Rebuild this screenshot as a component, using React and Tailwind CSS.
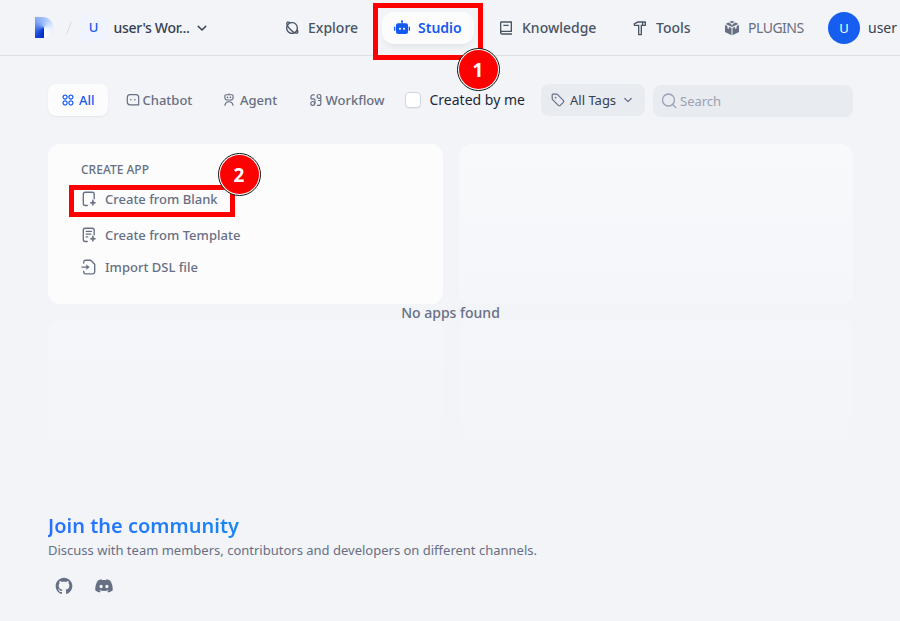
import { RiPlanetLine, RiRobot2Fill, RiBook2Line, RiHammerLine, RiApps2Line, RiRobot3Line, RiGithubFill, RiDiscordFill } from 'react-icons/ri';

const stroke = { fill: 'none', stroke: 'currentColor', strokeLinecap: 'round', strokeLinejoin: 'round' };

function DifyMark() {
  return (
    <div className="h-[21px] w-[18px] rounded-r-[10px] bg-[conic-gradient(from_180deg_at_50%_50%,#0328c4_0deg,#1f4fda_50deg,#4f7eea_90deg,#86abf5_135deg,#a9c6f9_190deg,#cfe0fc_240deg,#e9f1fe_280deg,#ffffff_359deg)] shadow-[0_0_1px_rgba(0,40,120,0.15)]" />
  );
}

function Chevron({ className }) {
  return (
    <svg viewBox="0 0 12 12" className={className} {...stroke} strokeWidth="1.5">
      <path d="M2.2 4.2 6 8l3.8-3.8" />
    </svg>
  );
}

function Cube() {
  return (
    <svg viewBox="0 0 16 16" className="h-4 w-4" fill="currentColor">
      <path d="M8 .8 10.6 2 8 3.2 5.4 2z" />
      <path d="M4.300 2.500 7.300 3.900v1.200L8 5.400l.7-.3V3.900l3-1.400 2.700 1.400L8 7 1.600 3.900z" />
      <path d="M1 4.900 3.400 6.100v2.200l1.500.8V6.800L7.500 8v7.200L1 12z" />
      <path d="M15 4.900 12.600 6.100v2.200l-1.500.8V6.800L8.500 8v7.200L15 12z" />
    </svg>
  );
}

function ChatIcon() {
  return (
    <svg viewBox="0 0 14 14" className="h-[14px] w-[14px] shrink-0" {...stroke} strokeWidth="1.2">
      <path d="M4 1.700h6A2.800 2.800 0 0 1 12.700 4.500v7.300H4A2.800 2.800 0 0 1 1.300 9V4.500A2.800 2.800 0 0 1 4 1.700z" />
      <path d="M4.900 6.300v.7M8.900 6.300v.7" />
    </svg>
  );
}

function FlowIcon() {
  return (
    <svg viewBox="0 0 14 14" className="h-[14px] w-[14px] shrink-0" {...stroke} strokeWidth="1.2">
      <path d="M5.200 1.800H4a2 2 0 0 0-2 2V5.800h2.600a1.500 1.500 0 0 1 1.400 1.500v3" />
      <circle cx="10" cy="3.400" r="1.900" />
      <circle cx="3.700" cy="10.400" r="1.900" />
      <path d="M8.300 12.400h1.500a2 2 0 0 0 2-2V5.500M11.800 7.500H9.500" />
    </svg>
  );
}

function FileIcon({ kind }) {
  return (
    <svg viewBox="0 0 16 16" className="mr-2 h-4 w-4 shrink-0" {...stroke} strokeWidth="1.350">
      {kind === 'import' ? (
        <>
          <path d="M2.700 4V3a1.800 1.800 0 0 1 1.800-1.800h5.200l4 4V13a1.800 1.800 0 0 1-1.800 1.800H4.500A1.800 1.800 0 0 1 2.700 13v-.8" />
          <path d="M.9 8.100h6.500" />
          <path d="M5.600 5.900 8.200 8.100 5.600 10.300z" fill="currentColor" strokeWidth=".5" />
        </>
      ) : (
        <>
          <path d="M6.300 14.500H4.300A2 2 0 0 1 2.300 12.500V3.200a2 2 0 0 1 2-2h6.900a2 2 0 0 1 2 2v4.600" />
          <path d="M11.900 9.100l.7 2 2 .7-2 .7-.7 2-.7-2-2-.7 2-.7z" fill="currentColor" strokeWidth=".8" />
          {kind === 'template' && <path d="M5.200 4.300h5.200M5.200 7.100h4.600M5.200 9.900h1.500" />}
        </>
      )}
    </svg>
  );
}

function TagIcon() {
  return (
    <svg viewBox="0 0 14 14" className="h-[14px] w-[14px] shrink-0 text-[#676f83]" {...stroke} strokeWidth="1.200">
      <path d="M1.200 1.900v3.700c0 .4.100.7.400 1l5.700 5.700c.6.600 1.400.6 2 0l3-3c.6-.6.600-1.400 0-2L6.600 1.600a1.400 1.400 0 0 0-1-.4H1.900a.7.700 0 0 0-.7.700z" />
      <circle cx="4.600" cy="4.600" r=".35" fill="currentColor" />
    </svg>
  );
}

function Marker({ n, className }) {
  return (
    <div className={`absolute flex h-[43px] w-[43px] items-center justify-center rounded-full border-[1.5px] border-[#111] bg-white p-[1px] ${className}`}>
      <div className="flex h-full w-full items-center justify-center rounded-full bg-[#fe0000] pt-[2px] text-[19px] font-bold text-white">{n}</div>
    </div>
  );
}

function Header() {
  return (
    <header className="flex h-14 w-[1000px] shrink-0 items-center border-b border-[#dcdfe4] text-sm font-medium text-[#495464]">
      <div className="ml-[35px] flex w-[250px] items-center">
        <DifyMark />
        <svg viewBox="0 0 8 14" className="ml-[12px] h-[14px] w-2 text-[#d8dce3]" {...stroke}><path d="M2 12.500 6 1.500" /></svg>
        <div className="ml-[6px] flex h-7 w-7 items-center justify-center rounded-lg bg-[#eff4ff] pl-px text-[13px] text-[#155aef]">U</div>
        <span className="ml-[6.500px] w-[82.500px] text-sm tracking-[-0.3px] text-[#354052]">user's Wor...</span>
        <Chevron className="h-3 w-3 text-[#354052]" />
      </div>
      <div className="flex w-[97px] items-center gap-2"><RiPlanetLine className="-ml-px h-4 w-4" />Explore</div>
      <div className="flex h-8 w-[92px] items-center gap-2 rounded-xl bg-[#fcfcfd] pl-3 font-semibold text-[#155aef] shadow-[0_4px_6px_-2px_rgba(16,24,40,0.08)]">
        <RiRobot2Fill className="h-4 w-4" />Studio
      </div>
      <div className="ml-6 flex w-[134px] items-center gap-2"><RiBook2Line className="h-4 w-4" />Knowledge</div>
      <div className="flex w-[92px] items-center gap-2"><RiHammerLine className="h-4 w-4" />Tools</div>
      <div className="flex w-[104px] items-center gap-2 font-normal text-[#676f83]"><Cube /><span className="pt-px text-sm tracking-[-0.5px]">PLUGINS</span></div>
      <div className="flex items-center gap-2 font-normal text-[#354052]">
        <div className="flex h-8 w-8 items-center justify-center rounded-full bg-[#155eef] pt-px text-[13px] text-white">U</div>
        <span>user</span>
      </div>
    </header>
  );
}

function Filters() {
  return (
    <div className="flex h-[34px] items-center text-[13px] font-medium text-[#676f83]">
      <div className="flex h-8 w-[60px] shrink-0 items-center gap-1 rounded-lg bg-[#fcfcfd] pl-[13px] text-[#155aef] shadow-[0_1px_2px_rgba(16,24,40,0.06)]"><RiApps2Line className="h-[14px] w-[14px]" /><span className="pt-px">All</span></div>
      <div className="flex w-[97px] shrink-0 items-center gap-[3px] pl-[17.500px]"><ChatIcon /><span className="pt-px">Chatbot</span></div>
      <div className="flex w-[86px] shrink-0 items-center gap-1 pl-[17px]"><RiRobot3Line className="h-[14px] w-[14px]" /><span className="pt-px">Agent</span></div>
      <div className="flex w-[114px] shrink-0 items-center gap-[3px] pl-[17.500px]"><FlowIcon /><span className="pt-px">Workflow</span></div>
      <div className="flex w-[136px] shrink-0 items-center gap-2 text-sm font-normal text-[#1d2939]">
        <div className="h-4 w-4 shrink-0 rounded-[4px] border border-[#d0d5dd] bg-white shadow-[0_1px_1px_rgba(16,24,40,0.05)]" />
        <span className="pl-[0.500px]">Created by me</span>
      </div>
      <div className="flex h-8 w-[104px] shrink-0 items-center rounded-lg bg-[#e8ebf0] pl-[10px] text-[#354052]">
        <TagIcon /><span className="ml-[5px] w-[53px] pt-px font-normal">All Tags</span><Chevron className="h-[10px] w-[10px] text-[#676f83]" />
      </div>
      <div className="ml-2 mt-[2px] flex h-8 w-[200px] shrink-0 items-center rounded-lg bg-[#e8ebf0] pl-2 font-normal text-[#98a2b2]">
        <svg viewBox="0 0 16 16" className="mr-[3px] h-4 w-4" {...stroke} strokeWidth="1.300"><circle cx="7.500" cy="7" r="6" /><path d="m12 11.800 2.800 2.800" /></svg>
        <span className="pt-px">Search</span>
      </div>
    </div>
  );
}

export default function App() {
  return (
    <div className="relative flex h-[621px] w-[900px] flex-col overflow-hidden bg-[#f2f4f7] font-['Noto_Sans',sans-serif]">
      <Header />
      <main className="pl-12 pt-[27px]">
        <Filters />
        <div className="relative mt-[27px] h-[336px]">
          <div className="grid w-[805px] grid-cols-[395px_394px] grid-rows-[160px_160px] gap-4">
            <section className="rounded-xl bg-[#fcfcfd] pl-[33px] pt-[17px] text-[13px] font-medium text-[#676f83]">
              <h2 className="text-xs leading-[18px]">CREATE APP</h2>
              <div className="mt-[4px] flex h-8 items-center"><FileIcon kind="blank" /><span className="pt-[2px]">Create from Blank</span></div>
              <div className="mt-1 flex h-8 items-center"><FileIcon kind="template" /><span className="pt-[2px]">Create from Template</span></div>
              <div className="flex h-8 items-center"><FileIcon kind="import" /><span className="pt-[2px]">Import DSL file</span></div>
            </section>
            <div className="rounded-xl bg-linear-to-b from-[#f8f9fb] to-[#f5f6f9]" />
            <div className="rounded-xl bg-linear-to-b from-[#f4f6f9] to-[#f2f4f7]" />
            <div className="rounded-xl bg-linear-to-b from-[#f4f6f9] to-[#f2f4f7]" />
          </div>
          <p className="absolute left-0 top-[158px] w-[805px] text-center text-sm font-medium leading-[21px] text-[#676f83]">No apps found</p>
        </div>
        <footer className="pt-[32px]">
          <h3 className="w-fit bg-linear-to-r from-[#2970ff] to-[#1a86f0] bg-clip-text text-xl font-semibold leading-7 text-transparent">Join the community</h3>
          <p className="text-[13px] leading-5 text-[#676f83]">Discuss with team members, contributors and developers on different channels.</p>
          <div className="mt-[16px] flex gap-5 pl-[6px] text-[#676f83]">
            <RiGithubFill className="h-5 w-5" /><RiDiscordFill className="h-5 w-5" />
          </div>
        </footer>
      </main>
      <div className="absolute left-[373px] top-[3px] h-[57px] w-[110px] border-[5px] border-[#fe0000]" />
      <div className="absolute left-[68.500px] top-[184.500px] h-[32px] w-[166px] border-[5px] border-[#fe0000]" />
      <Marker n="1" className="left-[456.500px] top-[47.500px]" />
      <Marker n="2" className="left-[217.500px] top-[152.500px]" />
    </div>
  );
}
